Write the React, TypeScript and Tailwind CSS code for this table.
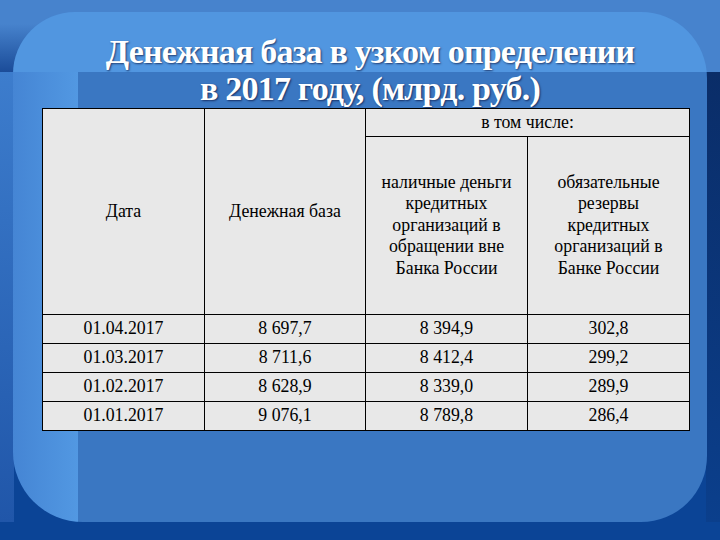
import React from "react";

const rows = [
  ["01.04.2017", "8 697,7", "8 394,9", "302,8"],
  ["01.03.2017", "8 711,6", "8 412,4", "299,2"],
  ["01.02.2017", "8 628,9", "8 339,0", "289,9"],
  ["01.01.2017", "9 076,1", "8 789,8", "286,4"],
];

export default function App() {
  return (
    <div className="relative w-[720px] h-[540px] overflow-hidden bg-[#0b4496] font-['Liberation_Serif','Times_New_Roman',serif]">
      {/* decorative slide background */}
      <div aria-hidden className="absolute left-0 top-0 w-[720px] h-[72px] bg-[#4783cd]" />
      <div aria-hidden className="absolute left-0 top-[24px] w-[40px] h-[48px] bg-gradient-to-b from-[#4783cd] to-[#1b4c99]" />
      <div aria-hidden className="absolute left-0 top-[72px] w-[14px] h-[450px] bg-gradient-to-b from-[#3d7dcd] to-[#2056a9]" />
      <div aria-hidden className="absolute left-[706px] top-[72px] w-[14px] h-[450px] bg-gradient-to-b from-[#0a2d68] to-[#0b3f8c]" />
      <div aria-hidden className="absolute left-[13px] top-[12px] w-[694px] h-[510px] rounded-tl-[62px] rounded-tr-[66px] rounded-bl-[70px] rounded-br-[66px] overflow-hidden flex flex-col">
        <div className="h-[60px] bg-[#5196e0]" />
        <div className="flex-1 flex">
          <div className="w-[65px] bg-gradient-to-r from-[#4585d4] to-[#5298e2]" />
          <div className="flex-1 bg-[#3a77c2]" />
        </div>
      </div>

      {/* content */}
      <div className="relative flex flex-col pt-[33px]">
        <h1 className="w-[720px] pl-[20px] text-center text-white font-bold text-[34px] leading-[37px] tracking-[-0.8px] [text-shadow:1px_1px_2px_rgba(0,0,40,0.6)]">
          <div>Денежная база в узком определении</div>
          <div>в 2017 году, (млрд. руб.)</div>
        </h1>
        <div className="pl-[42px] pt-px">
          <table className="table-fixed border-collapse w-[647px] bg-[#e8e8e8] text-black text-[17.8px] leading-[21.5px] border border-[#111] font-['Liberation_Serif','Times_New_Roman',serif]">
            <colgroup>
              <col className="w-[162px]" />
              <col className="w-[161px]" />
              <col className="w-[162px]" />
              <col className="w-[162px]" />
            </colgroup>
            <tbody>
              <tr className="h-[28px]">
                <td rowSpan={2} className="border border-black text-center align-middle">Дата</td>
                <td rowSpan={2} className="border border-black text-center align-middle">Денежная база</td>
                <td colSpan={2} className="border border-black text-center align-middle">в том числе:</td>
              </tr>
              <tr className="h-[178px]">
                <td className="border border-black text-center align-middle">
                  наличные деньги<br />кредитных<br />организаций в<br />обращении вне<br />Банка России
                </td>
                <td className="border border-black text-center align-middle">
                  обязательные<br />резервы<br />кредитных<br />организаций в<br />Банке России
                </td>
              </tr>
              {rows.map((r) => (
                <tr key={r[0]} className="h-[29px]">
                  {r.map((c, i) => (
                    <td key={i} className="border border-black text-center align-middle">{c}</td>
                  ))}
                </tr>
              ))}
            </tbody>
          </table>
        </div>
      </div>
    </div>
  );
}
